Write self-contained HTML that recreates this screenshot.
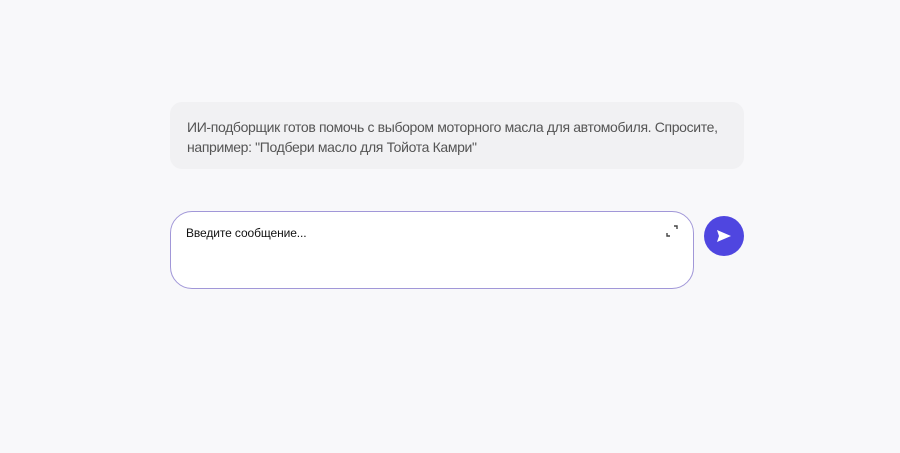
<!DOCTYPE html>
<html><head><meta charset="utf-8"><style>
html,body{margin:0;width:900px;height:453px;background:#f8f8fa;font-family:"Liberation Sans",sans-serif;position:relative;overflow:hidden}
.bub{position:absolute;left:170px;top:102px;width:574px;height:67px;background:#f1f1f3;border-radius:12px}
.t{position:absolute;left:187px;top:117px;font-size:14px;line-height:20px;color:#555;width:560px;letter-spacing:-0.35px;white-space:nowrap}
.inp{position:absolute;left:170px;top:211px;width:524px;height:78px;box-sizing:border-box;background:#fff;border:1px solid #a197d8;border-radius:22px}
.ph{position:absolute;left:186px;top:226px;font-size:12px;color:#111;letter-spacing:-0.1px}
.btn{position:absolute;left:704px;top:216px;width:40px;height:40px;border-radius:50%;background:#4f46e0}
</style></head><body>
<div class="bub"></div>
<div class="t">ИИ-подборщик готов помочь с выбором моторного масла для автомобиля. Спросите,<br>например: "Подбери масло для Тойота Камри"</div>
<div class="inp"></div>
<div class="ph">Введите сообщение...</div>
<svg style="position:absolute;left:665px;top:224px" width="14" height="14" viewBox="0 0 14 14" fill="none" stroke="#444" stroke-width="1.4"><path d="M9 2h3v3M2 9v3h3"/></svg>
<div class="btn"><svg style="position:absolute;left:12px;top:13px" width="16" height="14" viewBox="0 0 16 14"><path d="M1 1L15 7L1 13L3 7Z" fill="#fff"/></svg></div>
</body></html>
